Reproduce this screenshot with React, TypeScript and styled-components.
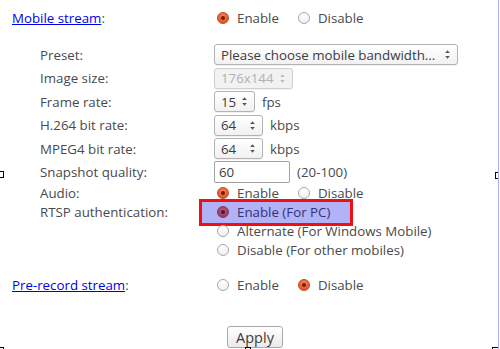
import React from "react";
import styled, { createGlobalStyle, css } from "styled-components";

const Global = createGlobalStyle`
  html, body { margin: 0; padding: 0; background: #fff; }
  body { font-family: "Open Sans", "DejaVu Sans", sans-serif; font-size: 13.3px; color: #4a4a4a; }
`;

const Page = styled.div`
  position: relative;
  width: 499px;
  height: 349px;
  box-sizing: border-box;
  padding: 8px 0 0 12px;
  border-right: 1px solid #a7b9ee;
  overflow: hidden;
`;

const Form = styled.div`
  display: grid;
  grid-template-columns: 202px 1fr;
  align-items: center;
`;

const Label = styled.div<{ $sub?: boolean; $h: number; $mt?: number }>`
  height: ${(p) => p.$h}px;
  margin-top: ${(p) => p.$mt ?? 0}px;
  display: flex;
  align-items: center;
  padding-left: ${(p) => (p.$sub ? 28 : 0)}px;
  color: #4a4a4a;
  white-space: nowrap;
`;

const Value = styled.div<{ $h: number; $mt?: number }>`
  position: relative;
  height: ${(p) => p.$h}px;
  margin-top: ${(p) => p.$mt ?? 0}px;
  display: flex;
  align-items: center;
  gap: 7px;
  white-space: nowrap;
`;

const Link = styled.a`
  color: #0000ee;
  text-decoration: underline;
`;

const RadioOption = styled.label`
  display: inline-flex;
  align-items: center;
  gap: 8px;
  margin-left: 3px;
  margin-right: 9px;
  color: #4a4a4a;
`;

const RadioDot = styled.span<{ $on?: boolean }>`
  box-sizing: border-box;
  width: 12px;
  height: 12px;
  border-radius: 50%;
  flex: none;
  display: inline-flex;
  align-items: center;
  justify-content: center;
  ${(p) =>
    p.$on
      ? css`
          background: radial-gradient(circle at 50% 35%, #f58a5c 0%, #e2572a 70%);
          border: 1px solid #c4471c;
          &::after {
            content: "";
            width: 4px;
            height: 4px;
            border-radius: 50%;
            background: #6b1e05;
          }
        `
      : css`
          background: linear-gradient(#ffffff, #f0f0f0);
          border: 1px solid #a8a8a8;
        `}
`;

const SelectBox = styled.div<{ $w: number; $disabled?: boolean }>`
  box-sizing: border-box;
  width: ${(p) => p.$w}px;
  height: 21px;
  display: flex;
  align-items: center;
  justify-content: space-between;
  padding: 0 6px 0 6px;
  border: 1px solid ${(p) => (p.$disabled ? "#cfcfcf" : "#b3b3b3")};
  border-radius: 3px;
  background: ${(p) => (p.$disabled ? "#f2f2f2" : "linear-gradient(#ffffff, #f1f1f1)")};
  color: ${(p) => (p.$disabled ? "#b0b0b0" : "#3c3c3c")};
  box-shadow: 0 1px 0 rgba(0, 0, 0, 0.06);
`;

const TextBox = styled.div`
  box-sizing: border-box;
  width: 76px;
  height: 22px;
  display: flex;
  align-items: center;
  padding: 0 4px;
  border: 1px solid #a0a0a0;
  border-radius: 2px;
  background: #fff;
  color: #3c3c3c;
`;

const Unit = styled.span`
  color: #4a4a4a;
`;

const Highlight = styled.div`
  position: absolute;
  left: -15px;
  top: -4px;
  width: 154px;
  height: 27px;
  box-sizing: border-box;
  border: 3px solid #ee1111;
  background: rgba(0, 0, 230, 0.3);
  pointer-events: none;
`;

const ButtonRow = styled.div`
  display: flex;
  justify-content: center;
  margin-top: 31px;
`;

const Button = styled.button`
  box-sizing: border-box;
  width: 56px;
  height: 22px;
  padding: 0;
  font-family: inherit;
  font-size: 14.5px;
  color: #3c3c3c;
  border: 1px solid #a9a9a9;
  border-radius: 3px;
  background: linear-gradient(#ffffff, #ebebeb);
`;

const Handle = styled.div<{ $x: number; $y: number; $w: number; $h: number }>`
  position: absolute;
  left: ${(p) => p.$x}px;
  top: ${(p) => p.$y}px;
  width: ${(p) => p.$w}px;
  height: ${(p) => p.$h}px;
  box-sizing: border-box;
  border: 1px solid #000;
  background: #fff;
`;

const Arrows = ({ color = "#555" }: { color?: string }) => (
  <svg width="7" height="11" viewBox="0 0 7 11">
    <path d="M1.2 4 L3.5 1.2 L5.8 4 Z" fill={color} />
    <path d="M1.2 7 L3.5 9.8 L5.8 7 Z" fill={color} />
  </svg>
);

const Radio = ({ on, children }: { on?: boolean; children: React.ReactNode }) => (
  <RadioOption>
    <RadioDot $on={on} />
    {children}
  </RadioOption>
);

const CH = 23.4;
const RH = 19;

export default function App() {
  return (
    <Page>
      <Global />
      <Form>
        <Label $h={20}>
          <span>
            <Link href="#">Mobile stream</Link>:
          </span>
        </Label>
        <Value $h={20}>
          <Radio on>Enable</Radio>
          <Radio>Disable</Radio>
        </Value>

        <Label $sub $h={CH} $mt={15.3}>Preset:</Label>
        <Value $h={CH} $mt={15.3}>
          <SelectBox $w={244}>
            <span>Please choose mobile bandwidth...</span>
            <Arrows />
          </SelectBox>
        </Value>

        <Label $sub $h={CH}>Image size:</Label>
        <Value $h={CH}>
          <SelectBox $w={79} $disabled>
            <span>176x144</span>
            <Arrows color="#bbb" />
          </SelectBox>
        </Value>

        <Label $sub $h={CH}>Frame rate:</Label>
        <Value $h={CH}>
          <SelectBox $w={41}>
            <span>15</span>
            <Arrows />
          </SelectBox>
          <Unit>fps</Unit>
        </Value>

        <Label $sub $h={CH}>H.264 bit rate:</Label>
        <Value $h={CH}>
          <SelectBox $w={49}>
            <span>64</span>
            <Arrows />
          </SelectBox>
          <Unit>kbps</Unit>
        </Value>

        <Label $sub $h={CH}>MPEG4 bit rate:</Label>
        <Value $h={CH}>
          <SelectBox $w={49}>
            <span>64</span>
            <Arrows />
          </SelectBox>
          <Unit>kbps</Unit>
        </Value>

        <Label $sub $h={CH}>Snapshot quality:</Label>
        <Value $h={CH}>
          <TextBox>60</TextBox>
          <Unit>(20-100)</Unit>
        </Value>

        <Label $sub $h={RH}>Audio:</Label>
        <Value $h={RH}>
          <Radio on>Enable</Radio>
          <Radio>Disable</Radio>
        </Value>

        <Label $sub $h={RH}>RTSP authentication:</Label>
        <Value $h={RH}>
          <Radio on>Enable (For PC)</Radio>
          <Highlight />
        </Value>

        <Label $h={RH} />
        <Value $h={RH}>
          <Radio>Alternate (For Windows Mobile)</Radio>
        </Value>

        <Label $h={RH} />
        <Value $h={RH}>
          <Radio>Disable (For other mobiles)</Radio>
        </Value>

        <Label $h={20} $mt={15.5}>
          <span>
            <Link href="#">Pre-record stream</Link>:
          </span>
        </Label>
        <Value $h={20} $mt={15.5}>
          <Radio>Enable</Radio>
          <Radio on>Disable</Radio>
        </Value>
      </Form>
      <ButtonRow>
        <Button>Apply</Button>
      </ButtonRow>
      <Handle $x={-1} $y={171} $w={5} $h={7} />
      <Handle $x={495} $y={172} $w={6} $h={7} />
      <Handle $x={-1} $y={347} $w={5} $h={3} />
      <Handle $x={245} $y={347} $w={6} $h={3} />
      <Handle $x={492} $y={347} $w={9} $h={3} />
    </Page>
  );
}
